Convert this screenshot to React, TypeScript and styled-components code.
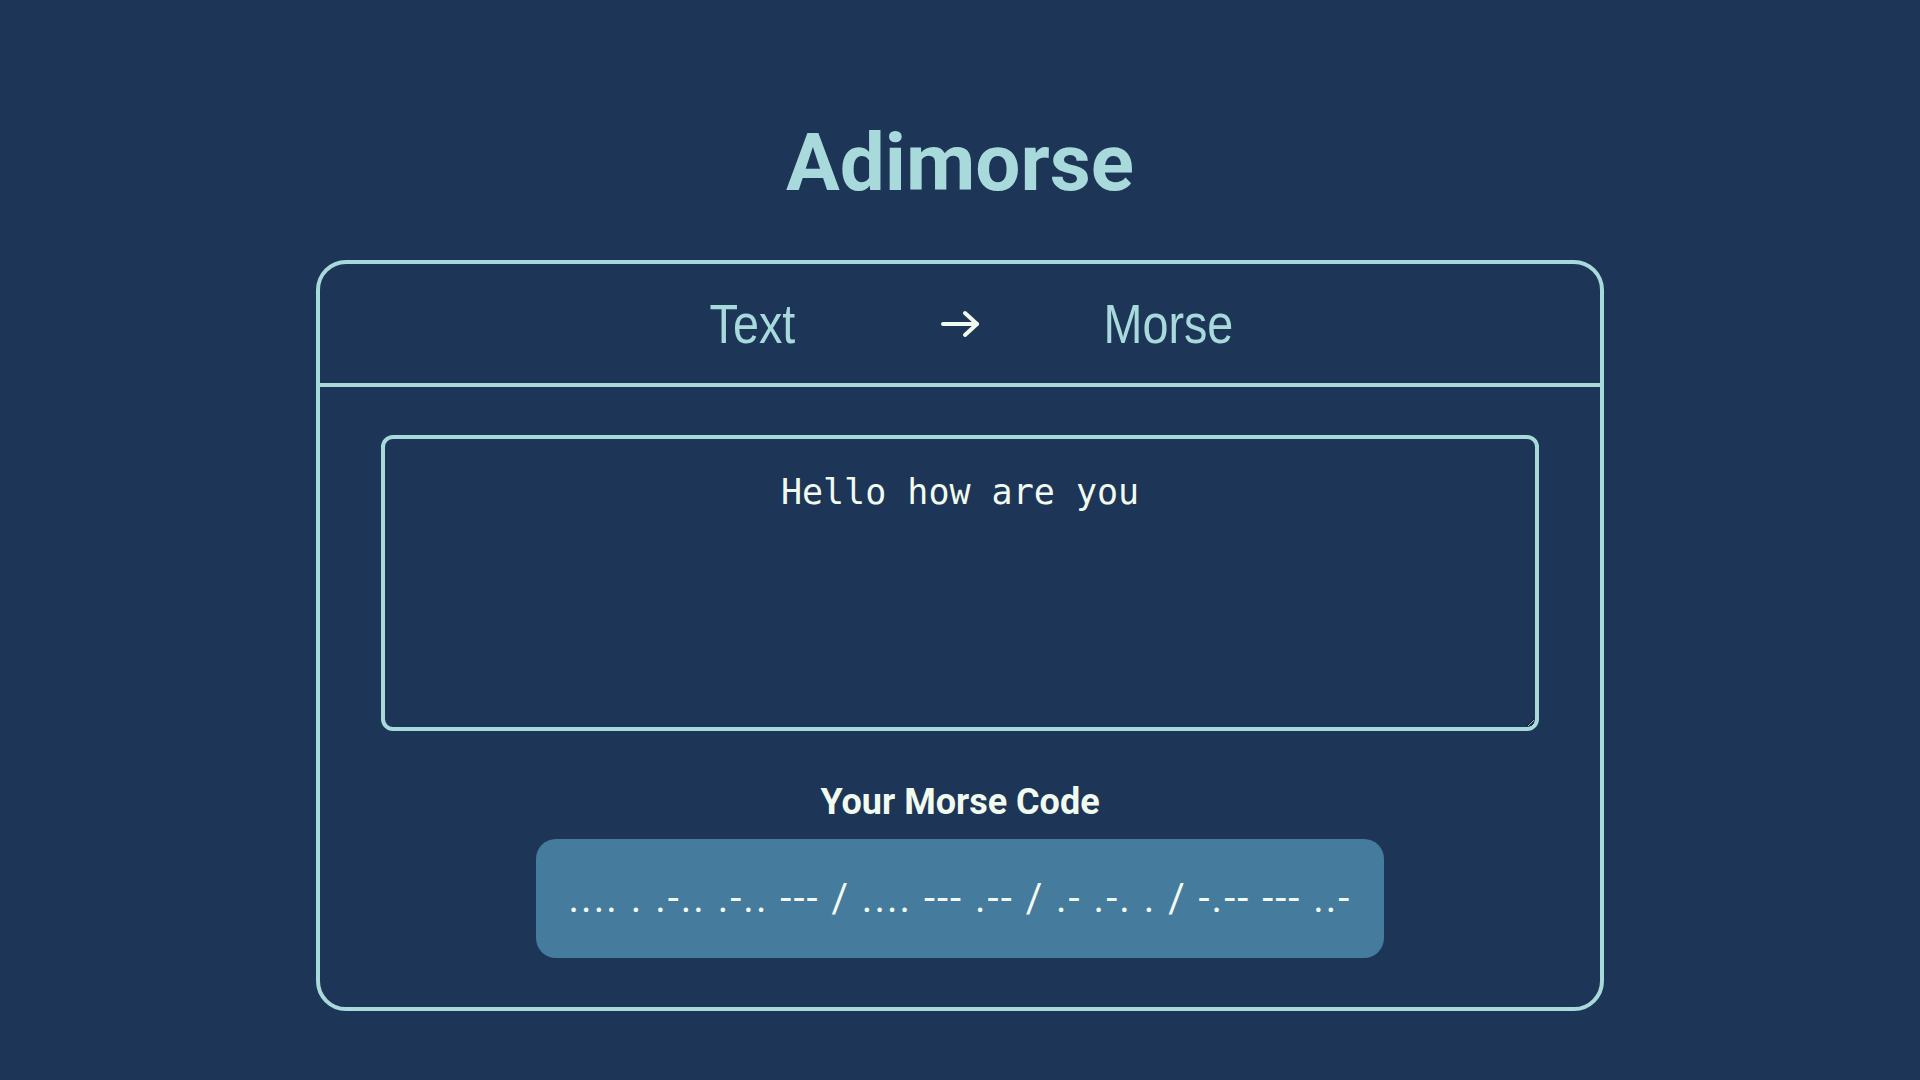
import { useState } from 'react';
import styled, { createGlobalStyle } from 'styled-components';

const MORSE: Record<string, string> = {
  a: '.-', b: '-...', c: '-.-.', d: '-..', e: '.', f: '..-.', g: '--.',
  h: '....', i: '..', j: '.---', k: '-.-', l: '.-..', m: '--', n: '-.',
  o: '---', p: '.--.', q: '--.-', r: '.-.', s: '...', t: '-', u: '..-',
  v: '...-', w: '.--', x: '-..-', y: '-.--', z: '--..',
  '0': '-----', '1': '.----', '2': '..---', '3': '...--', '4': '....-',
  '5': '.....', '6': '-....', '7': '--...', '8': '---..', '9': '----.',
};

const toMorse = (text: string) =>
  text
    .trim()
    .toLowerCase()
    .split(/\s+/)
    .map((word) =>
      word
        .split('')
        .map((c) => MORSE[c])
        .filter(Boolean)
        .join(' ')
    )
    .join(' / ');

const GlobalStyle = createGlobalStyle`
  body {
    margin: 0;
    background-color: #1d3557;
    font-family: Roboto, "Liberation Sans", sans-serif;
  }
`;

const Page = styled.main`
  align-items: center;
  box-sizing: border-box;
  display: flex;
  flex-direction: column;
  min-height: 100vh;
  padding-top: 116px;
`;

const Title = styled.h1`
  color: #a8dadc;
  font-size: 80px;
  font-weight: 700;
  line-height: normal;
  margin: 0 0 50px 0;
`;

const Card = styled.section`
  border: solid 4px #a8dadc;
  border-radius: 30px;
  box-sizing: border-box;
  width: 1288px;
`;

const Header = styled.div`
  align-items: center;
  border-bottom: solid 4px #a8dadc;
  display: grid;
  grid-template-columns: repeat(3, 208px);
  height: 119px;
  justify-content: center;
  justify-items: center;
`;

/* narrow face is not installed, so squeeze the regular one */
const Lang = styled.span`
  color: #a8dadc;
  display: inline-block;
  font-family: "Liberation Sans Narrow", "Liberation Sans", sans-serif;
  font-size: 55px;
  transform: scaleX(0.85);
`;

const Arrow = styled.svg`
  color: #f1faee;
  display: block;
  height: 30px;
  width: 40px;
`;

const Body = styled.div`
  align-items: center;
  display: flex;
  flex-direction: column;
  padding: 48px 61px 49px 61px;
`;

const TextInput = styled.textarea`
  background: transparent;
  border: solid 4px #a8dadc;
  border-radius: 12px;
  box-sizing: border-box;
  color: #f1faee;
  font-family: "DejaVu Sans Mono", monospace;
  font-size: 35px;
  height: 296px;
  outline: none;
  padding: 33px 32px 32px 32px;
  text-align: center;
  width: 100%;
`;

const Subtitle = styled.h2`
  color: #f1faee;
  font-size: 36px;
  font-weight: 700;
  line-height: normal;
  margin: 50px 0 16px 0;
`;

const Output = styled.div`
  align-items: center;
  background-color: #457b9d;
  border-radius: 20px;
  color: #f1faee;
  display: flex;
  font-size: 40px;
  height: 119px;
  justify-content: center;
  letter-spacing: 2px;
  white-space: nowrap;
  width: 848px;
`;

function App() {
  const [text, setText] = useState('Hello how are you');

  return (
    <Page>
      <GlobalStyle />
      <Title>Adimorse</Title>
      <Card>
        <Header>
          <Lang>Text</Lang>
          <Arrow viewBox="0 0 40 30" fill="none" stroke="currentColor" strokeWidth="4" strokeLinecap="round" strokeLinejoin="round">
            <path d="M3 15H37" />
            <path d="M25 4L37 15L25 26" />
          </Arrow>
          <Lang>Morse</Lang>
        </Header>
        <Body>
          <TextInput value={text} onChange={(e) => setText(e.target.value)} />
          <Subtitle>Your Morse Code</Subtitle>
          <Output>{toMorse(text)}</Output>
        </Body>
      </Card>
    </Page>
  );
}

export default App;
